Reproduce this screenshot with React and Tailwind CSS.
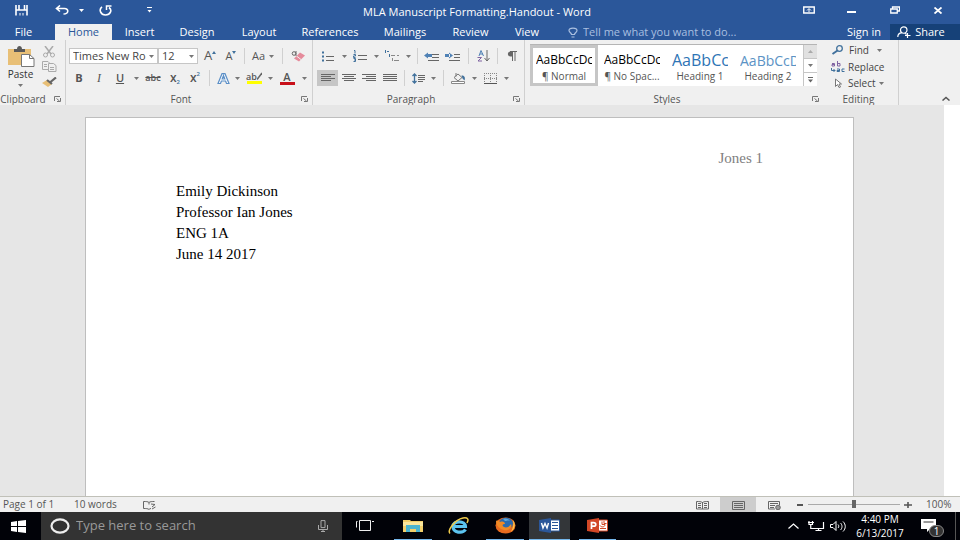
import React, { useState } from 'react';

const tabs = [
  { name: 'Insert', width: 'w-[55px]' },
  { name: 'Design', width: 'w-[60px]' },
  { name: 'Layout', width: 'w-[64px]' },
  { name: 'References', width: 'w-[78px]' },
  { name: 'Mailings', width: 'w-[72px]' },
  { name: 'Review', width: 'w-[59px]' },
  { name: 'View', width: 'w-[54px]' },
];

const styleCards = [
  { name: '¶ Normal', sample: 'AaBbCcDc', look: 'text-[12px] text-black' },
  { name: '¶ No Spac...', sample: 'AaBbCcDc', look: 'text-[12px] text-black' },
  { name: 'Heading 1', sample: 'AaBbCc', look: 'text-[16px] text-[#2e74b5]' },
  { name: 'Heading 2', sample: 'AaBbCcD', look: 'text-[14px] text-[#5b93c5]' },
];

const Svg = ({ w, h, children, className = '' }) => (
  <svg width={w} height={h} viewBox={`0 0 ${w} ${h}`} fill="none" className={`shrink-0 ${className}`} aria-hidden="true">
    {children}
  </svg>
);

const Caret = () => (
  <Svg w={5} h={3}>
    <path d="M0 0h5L2.5 3z" fill="#777" />
  </Svg>
);

const Tool = ({ label, width, className = '', children }) => (
  <button
    type="button"
    aria-label={label}
    className={`flex h-4 shrink-0 items-center justify-center ${width} ${className}`}
  >
    {children}
  </button>
);

const Divider = ({ width }) => (
  <div className={`flex shrink-0 justify-center ${width}`}>
    <div className="h-4 w-px bg-[#d0d0d0]" />
  </div>
);

const Launcher = ({ label }) => (
  <button type="button" aria-label={label}>
    <Svg w={7} h={6}>
      <path d="M.5 5V.5H6M2.5 2.5l3 2.5M6.500 2v3.500H3" stroke="#777" />
    </Svg>
  </button>
);

const GroupLabel = ({ children, launcher }) => (
  <div className="mt-auto flex h-3 items-center pr-1 text-[10px] leading-3 text-[#555]">
    <span className="flex-1 pr-2 text-center">{children}</span>
    {launcher && <Launcher label={launcher} />}
  </div>
);

const TitleBar = () => (
  <div className="flex h-6 items-center">
    <div className="flex flex-1 items-center">
      <Tool label="Save" width="w-[43px]">
        <Svg w={13} h={11} className="-mt-1">
          <path d="M1 0v10.500M12 0v10.500M1 5h11M4 0v4.500M9.500 0v4.500" stroke="#fff" strokeWidth="1.600" />
          <path d="M5 8v2.500M8 8v2.500" stroke="#fff" />
        </Svg>
      </Tool>
      <Tool label="Undo" width="w-[38px]">
        <Svg w={14} h={10} className="-mt-1">
          <path d="M5 .5 1.500 3.500 5 6.500M2 3.500h7.500c4.500 0 4.500 5.500-1 5.500" stroke="#fff" strokeWidth="1.600" />
        </Svg>
      </Tool>
      <Tool label="Undo history" width="w-2" className="-ml-1">
        <Svg w={5} h={3} className="-mt-1"><path d="M0 0h5L2.500 3z" fill="#fff" /></Svg>
      </Tool>
      <Tool label="Redo" width="w-[40px]">
        <Svg w={13} h={11} className="-mt-1">
          <path d="M3 1.800C-.5 4.500 1.500 10 6.500 10s7-5 3.500-7.500" stroke="#fff" strokeWidth="1.600" />
          <path d="M7.500 5V1H12.500" stroke="#fff" strokeWidth="1.500" />
        </Svg>
      </Tool>
      <Tool label="Customize toolbar" width="w-[48px]">
        <Svg w={5} h={6} className="-mt-1">
          <path d="M0 .5h5" stroke="#fff" />
          <path d="M.5 3h4l-2 2.500z" fill="#fff" />
        </Svg>
      </Tool>
    </div>
    <h1 className="pr-[6px] text-[11px] leading-4">MLA Manuscript Formatting.Handout - Word</h1>
    <div className="flex flex-1 items-center justify-end">
      <Tool label="Ribbon display options" width="w-[43px]">
        <Svg w={12} h={8} className="-mt-1">
          <path d="M.75 1h10.500v6H.75z" stroke="#fff" strokeWidth="1.400" />
          <path d="M6 6V3M4 4.500l2-2 2 2" stroke="#fff" />
        </Svg>
      </Tool>
      <Tool label="Minimize" width="w-[43px]">
        <Svg w={9} h={2}><path d="M0 1h9" stroke="#fff" strokeWidth="2" /></Svg>
      </Tool>
      <Tool label="Restore" width="w-[43px]">
        <Svg w={10} h={8} className="-mt-1">
          <path d="M.75 3h6.500v4H.75zM2.500 3V1h7v4H7.500" stroke="#fff" strokeWidth="1.300" />
        </Svg>
      </Tool>
      <Tool label="Close" width="w-[44px]">
        <Svg w={8} h={7} className="-mt-1"><path d="m.5.5 7 6M7.500.5l-7 6" stroke="#fff" strokeWidth="1.800" /></Svg>
      </Tool>
    </div>
  </div>
);

const TabRow = () => (
  <nav className="flex h-4 items-stretch text-[11px] leading-4">
    <button type="button" className="w-[47px]">File</button>
    <button type="button" className="ml-2 w-[57px] bg-[#f0f0f0] text-[#2b579a]">Home</button>
    {tabs.map((tab) => (
      <button key={tab.name} type="button" className={tab.width}>{tab.name}</button>
    ))}
    <label className="ml-[14px] flex flex-1 items-center gap-[5px] text-[#a9bfe0]">
      <Svg w={10} h={11}>
        <path d="M3.500 7.500C3.500 6 1 5.500 1 3.500 1 .2 9 .2 9 3.500c0 2-2.500 2.500-2.500 4zM3.500 10h3" stroke="#a9bfe0" strokeWidth="1.200" />
      </Svg>
      <input
        type="text"
        aria-label="Tell me"
        placeholder="Tell me what you want to do..."
        className="w-full bg-transparent placeholder:text-[#a9bfe0] focus:outline-none"
      />
    </label>
    <button type="button" className="w-[52px] text-center">Sign in</button>
    <button type="button" className="flex w-[70px] items-center justify-center gap-1 bg-[#164178] pr-2">
      <Svg w={14} h={12}>
        <path d="M.8 11c0-2.500 2-4 4-4.300M3.500 4c0-4.300 6.500-4.300 6.500 0S3.500 8.300 3.500 4zM8 7l1.500 1.500M10.500 7v5M8 9.500h5.500" stroke="#fff" strokeWidth="1.200" />
      </Svg>
      Share
    </button>
  </nav>
);

const ClipboardGroup = () => (
  <section className="flex w-[65px] flex-col">
    <div className="flex">
      <button type="button" className="flex w-[41px] flex-col items-center pt-[5px] text-[10px] leading-3 text-[#333]">
        <Svg w={28} h={23}>
          <path d="M1 4h23v16H1z" fill="#e8bf76" />
          <path d="M7 4h3c0-4 5-4 5 0h3v3H7z" fill="#595959" />
          <path d="M14.500 9.500h8l4.500 4v8H14.500z" fill="#fff" stroke="#777" />
          <path d="M22.500 9.500v4H27" stroke="#777" />
        </Svg>
        Paste
        <span className="mt-1"><Caret /></span>
      </button>
      <div className="flex flex-col">
        <Tool label="Cut" width="w-4">
          <Svg w={14} h={12} className="mt-2">
            <path d="M3 0l6 8M11 0L5 8" stroke="#aaa" strokeWidth="1.500" />
            <circle cx="3.500" cy="9" r="2" stroke="#aaa" /><circle cx="10.500" cy="9" r="2" stroke="#aaa" />
          </Svg>
        </Tool>
        <Tool label="Copy" width="w-4" className="mt-[2px]">
          <Svg w={15} h={11}>
            <path d="M.5.5H6l2 2v6H.5zM2 3.500h3M2 5.500h3" stroke="#aaa" />
            <path d="M6.500 2.500h5l2.500 2v6H6.500z" fill="#f0f0f0" stroke="#aaa" />
            <path d="M8 6.500h4M8 8.500h4" stroke="#aaa" />
          </Svg>
        </Tool>
        <Tool label="Format painter" width="w-4">
          <Svg w={15} h={10}>
            <path d="M5 3 0 6l6 4 4-3z" fill="#e8bf76" />
            <path d="m5 3 5 4M8.500 5 14 .5" stroke="#666" strokeWidth="2.200" />
          </Svg>
        </Tool>
      </div>
    </div>
    <GroupLabel launcher="Clipboard settings">Clipboard</GroupLabel>
  </section>
);

const Combo = ({ label, width, value, options, onChange }) => (
  <div className={`relative flex h-4 shrink-0 items-center ${width}`}>
    <select
      aria-label={label}
      value={value}
      onChange={(e) => onChange(e.target.value)}
      className="h-4 w-full appearance-none border border-[#c6c6c6] bg-white pr-2 pl-[3px] text-[11px] leading-3 text-[#444]"
    >
      {options.map((option) => (
        <option key={option}>{option}</option>
      ))}
    </select>
    <span className="pointer-events-none absolute right-1"><Caret /></span>
  </div>
);

const FontGroup = () => {
  const [font, setFont] = useState('Times New Ro');
  const [size, setSize] = useState('12');

  return (
    <section className="flex w-[247px] flex-col border-l border-[#d0d0d0] pl-[3px] text-[#555]">
      <div className="mt-2 flex">
        <Combo label="Font" width="w-[89px]" value={font} options={['Times New Ro', 'Calibri']} onChange={setFont} />
        <Combo label="Font size" width="w-[40px]" value={size} options={['11', '12', '14']} onChange={setSize} />
        <Tool label="Grow font" width="w-6" className="text-[13px]">
          A<Svg w={4} h={3} className="mb-2"><path d="M0 3h4L2 0z" fill="#41719c" /></Svg>
        </Tool>
        <Tool label="Shrink font" width="w-[18px]" className="text-[11px]">
          A<Svg w={4} h={3} className="mb-2"><path d="M0 0h4L2 3z" fill="#41719c" /></Svg>
        </Tool>
        <Divider width="w-2" />
        <Tool label="Change case" width="w-[30px]" className="gap-1 text-[11px]">Aa<Caret /></Tool>
        <Divider width="w-2" />
        <Tool label="Clear formatting" width="w-6">
          <Svg w={14} h={11}>
            <path d="m9 1.500 5 3L8 10.500l-5-3z" fill="#e58b9b" />
            <path d="m5.500 5 4.500 3.500" stroke="#f0f0f0" />
            <circle cx="3" cy="2.500" r="1.800" stroke="#666" />
            <path d="M5 0v5" stroke="#666" />
          </Svg>
        </Tool>
      </div>
      <div className="mt-[6px] flex">
        <Tool label="Bold" width="w-5" className="text-[11px] font-bold">B</Tool>
        <Tool label="Italic" width="w-5" className="font-['Liberation_Serif',serif] text-[12px] italic">I</Tool>
        <Tool label="Underline" width="w-[22px]" className="text-[11px] font-semibold underline">U</Tool>
        <Tool label="Underline style" width="w-[10px]"><Caret /></Tool>
        <Tool label="Strikethrough" width="w-6" className="text-[9px] font-semibold line-through">abc</Tool>
        <Tool label="Subscript" width="w-5" className="text-[12px] font-semibold">
          x<span className="mt-2 text-[6px] text-[#41719c]">2</span>
        </Tool>
        <Tool label="Superscript" width="w-5" className="text-[12px] font-semibold">
          x<span className="mb-2 text-[6px] text-[#41719c]">2</span>
        </Tool>
        <Divider width="w-2" />
        <Tool label="Text effects" width="w-5">
          <Svg w={13} h={11}>
            <path d="M1 10.500 5 .7h3l4 9.800H9.500L8.600 8H4.400l-.9 2.500zM5.200 6h2.600L6.500 2.500z" stroke="#5b8fc7" strokeWidth="1.200" fill="#fff" />
          </Svg>
        </Tool>
        <Tool label="Text effects menu" width="w-2"><Caret /></Tool>
        <Tool label="Highlight" width="w-[26px]" className="flex-col text-[9px] leading-[9px] font-semibold">
          <span className="flex">ab
            <Svg w={5} h={8}><path d="M0 7.500 5 1" stroke="#666" strokeWidth="1.500" /></Svg>
          </span>
          <span className="h-[3px] w-[15px] bg-[#ffff00]" />
        </Tool>
        <Tool label="Highlight color" width="w-[7px]"><Caret /></Tool>
        <Tool label="Font color" width="w-[26px]" className="flex-col text-[11px] leading-[10px] font-semibold">
          A<span className="h-[3px] w-[15px] bg-[#c8101a]" />
        </Tool>
        <Tool label="Font color menu" width="w-2"><Caret /></Tool>
      </div>
      <GroupLabel launcher="Font settings">Font</GroupLabel>
    </section>
  );
};

const Lines = ({ d }) => (
  <Svg w={14} h={8}>
    <path d={d} stroke="#666" />
  </Svg>
);

const ParagraphGroup = () => (
  <section className="flex w-[212px] flex-col border-l border-[#d0d0d0] pl-1 text-[#555]">
    <div className="mt-2 flex">
      <Tool label="Bullets" width="w-[22px]">
        <Svg w={12} h={11}>
          <path d="M0 1.500h2M0 5.500h2M0 9.500h2" stroke="#41719c" strokeWidth="2" />
          <path d="M4 5.500h8M4 9.500h8" stroke="#666" />
        </Svg>
      </Tool>
      <Tool label="Bullet library" width="w-[10px]"><Caret /></Tool>
      <Tool label="Numbering" width="w-[22px]">
        <Svg w={14} h={12}>
          <path d="M1 .5h1v3M.5 4.500h2v1.500h-2v1.500h2M.5 8.500h2v3h-2M1 10h1" stroke="#41719c" />
          <path d="M5 5.500h9M5 9.500h9" stroke="#666" />
        </Svg>
      </Tool>
      <Tool label="Numbering library" width="w-[10px]"><Caret /></Tool>
      <Tool label="Multilevel list" width="w-[22px]">
        <Svg w={16} h={12}>
          <path d="M1.500 0v3M3 1.500h2M5.500 4v3" stroke="#41719c" />
          <path d="M7 5.500h4M13 5.500h2M8.500 8v3M10 10.500h5" stroke="#888" />
        </Svg>
      </Tool>
      <Tool label="Multilevel library" width="w-[10px]"><Caret /></Tool>
      <Divider width="w-2" />
      <Tool label="Decrease indent" width="w-5">
        <Svg w={15} h={9}>
          <path d="M8 2.500h7M8 5.500h7M4 8.500h11" stroke="#666" />
          <path d="M4 .5v6L0 3.500zM3 2h5v3H3z" fill="#4f81b5" />
        </Svg>
      </Tool>
      <Tool label="Increase indent" width="w-[22px]">
        <Svg w={15} h={9}>
          <path d="M9 2.500h6M9 5.500h6M4 8.500h11" stroke="#666" />
          <path d="M4 .5v6l4-3zM0 2h5v3H0z" fill="#4f81b5" />
        </Svg>
      </Tool>
      <Divider width="w-[10px]" />
      <Tool label="Sort" width="w-5">
        <Svg w={13} h={12}>
          <path d="M2 6 4 .5 6.500 6M3 4h3" stroke="#4f81b5" />
          <path d="M.5 7.500h4L1 11h4" stroke="#8064a2" />
          <path d="M10 0v10.500M7.500 8l2.500 3 2.500-3" stroke="#666" />
        </Svg>
      </Tool>
      <Divider width="w-2" />
      <Tool label="Show marks" width="w-[22px]">
        <Svg w={10} h={10}>
          <path d="M5 .5H3.500C0 .5 0 5.500 3.500 5.500H5z" fill="#666" />
          <path d="M3 .5h7M5.500 0v10M8 0v10" stroke="#666" />
        </Svg>
      </Tool>
    </div>
    <div className="mt-[6px] flex">
      <Tool label="Align left" width="w-[21px]" className="bg-[#c6c6c6]"><Lines d="M0 .5h14M0 2.500h10M0 4.500h14M0 6.500h10" /></Tool>
      <Tool label="Center" width="w-[21px]"><Lines d="M0 .5h14M2 2.500h10M0 4.500h14M2 6.500h10" /></Tool>
      <Tool label="Align right" width="w-5"><Lines d="M0 .5h14M4 2.500h10M0 4.500h14M4 6.500h10" /></Tool>
      <Tool label="Justify" width="w-[21px]"><Lines d="M0 .5h14M0 2.500h14M0 4.500h14M0 6.500h14" /></Tool>
      <Divider width="w-2" />
      <Tool label="Line spacing" width="w-5">
        <Svg w={13} h={11}>
          <path d="M2.500 1v9M.5 3l2-2 2 2M.5 8l2 2 2-2" stroke="#41719c" strokeWidth="1.300" />
          <path d="M6 2.500h7M6 4.500h7M6 6.500h7M6 8.500h5" stroke="#666" />
        </Svg>
      </Tool>
      <Tool label="Line spacing menu" width="w-[10px]"><Caret /></Tool>
      <Divider width="w-[10px]" />
      <Tool label="Shading" width="w-5">
        <Svg w={15} h={11}>
          <path d="M3 4.500 7 1l4 3.500-4 3.500zM5 0v3.500" stroke="#777" />
          <path d="M10.500 2.500c3 0 4 2 3 5l-2-2z" fill="#41719c" />
          <path d="M.5 8.500h13v2H.5z" fill="#fff" stroke="#888" />
        </Svg>
      </Tool>
      <Tool label="Shading color" width="w-3"><Caret /></Tool>
      <Tool label="Borders" width="w-5">
        <Svg w={13} h={11}>
          <path d="M.5 0v10M6.500 0v10M12.500 0v10M0 .5h13M0 5.500h13" stroke="#888" strokeDasharray="1 1" />
          <path d="M0 10.500h13" stroke="#555" />
        </Svg>
      </Tool>
      <Tool label="Borders menu" width="w-3"><Caret /></Tool>
    </div>
    <GroupLabel launcher="Paragraph settings">Paragraph</GroupLabel>
  </section>
);

const StylesGroup = () => (
  <section className="flex w-[299px] flex-col border-l border-[#d0d0d0] pl-[5px]">
    <div className="mt-1 flex h-[42px] w-[287px] border-t border-[#b5b5b5] bg-white">
      {styleCards.map((card, i) => (
        <button
          key={card.name}
          type="button"
          className={`flex w-[68px] shrink-0 flex-col items-center border-[3px] ${i === 0 ? 'border-[#c6c6c6]' : 'border-transparent'}`}
        >
          <span className={`mt-[3px] flex h-[18px] w-[56px] items-center overflow-hidden whitespace-nowrap ${card.look}`}>
            {card.sample}
          </span>
          <span className="text-[10px] leading-[14px] whitespace-nowrap text-[#555]">{card.name}</span>
        </button>
      ))}
      <div className="ml-auto flex w-[14px] flex-col border-l border-[#c6c6c6]">
        <button type="button" aria-label="Scroll up" className="flex flex-1 items-center justify-center bg-[#e1e1e1]">
          <Svg w={5} h={3}><path d="M0 3h5L2.500 0z" fill="#aaa" /></Svg>
        </button>
        <button type="button" aria-label="Scroll down" className="flex flex-1 items-center justify-center border-y border-[#c6c6c6]">
          <Caret />
        </button>
        <button type="button" aria-label="More styles" className="flex flex-1 items-center justify-center">
          <Svg w={5} h={6}><path d="M0 0h5v1H0zM0 2.500h5L2.500 5.500z" fill="#666" /></Svg>
        </button>
      </div>
    </div>
    <GroupLabel launcher="Styles settings">Styles</GroupLabel>
  </section>
);

const EditingGroup = () => (
  <section className="flex w-[76px] flex-col border-r border-[#d0d0d0] pl-2 text-[10px] leading-3 text-[#444]">
    <button type="button" className="mt-1 flex h-3 items-center gap-1">
      <Svg w={14} h={10}>
        <circle cx="8.500" cy="3.500" r="2.800" stroke="#41719c" strokeWidth="1.300" />
        <path d="m6.500 5.500-5 3.500" stroke="#41719c" strokeWidth="2" />
      </Svg>
      <span className="mr-1">Find</span>
      <Caret />
    </button>
    <button type="button" className="mt-[5px] flex h-3 items-center gap-[3px]">
      <Svg w={14} h={12}>
        <path d="M1 2.500h2.500V5H1V3.500h2.500M6.500 0v5H9V2.500H6.500" stroke="#8064a2" />
        <path d="M.5 7v2.500H4M2.500 8l1.500 1.500L2.500 11M6 8h2.500v2.500H6V9.500h2.500M13.500 8H11v2.500h2.500" stroke="#41719c" />
      </Svg>
      Replace
    </button>
    <button type="button" className="mt-1 flex h-3 items-center gap-[3px]">
      <Svg w={14} h={10}>
        <path d="M4.500 1v7.500l2-2 1.500 3 1.500-.5-1.500-3h2.500z" fill="#fff" stroke="#777" />
      </Svg>
      Select
      <Caret />
    </button>
    <GroupLabel>Editing</GroupLabel>
  </section>
);

const StatusBar = () => (
  <footer className="flex h-4 shrink-0 items-stretch border-t border-[#c0c0b8] bg-[#f0f0f0] text-[10px] leading-[15px] text-[#555]">
    <span className="w-[74px] pl-[3px]">Page 1 of 1</span>
    <span className="w-[68px]">10 words</span>
    <Tool label="Proofing" width="w-[14px]">
      <Svg w={13} h={9}>
        <path d="M6 1.500C5 .5 3 .5.5.5v7c2.500 0 4.500 0 5.500 1 .5-.5 1-1 2-1M6 1.500c1-1 3-1 5.500-1M6 1.500v2M8 3l4 .5-3 2.500M9 8l3.500-2" stroke="#666" />
      </Svg>
    </Tool>
    <div className="ml-auto flex items-stretch">
      <Tool label="Read mode" width="w-9">
        <Svg w={13} h={9}>
          <path d="M6.500 1.500C5 .5 3 .5.5.5v7.500h12V.5c-2.500 0-4.500 0-6 1zM6.500 1v7M2 2.500h3M2 4.500h3M2 6.500h3M8 2.500h3M8 4.500h3M8 6.500h3" stroke="#666" />
        </Svg>
      </Tool>
      <Tool label="Print layout" width="w-9" className="bg-[#cdcdcd]">
        <Svg w={13} h={9}><path d="M.5.5h12v8H.5zM2 2.500h9M2 4.500h9M2 6.500h9" stroke="#666" /></Svg>
      </Tool>
      <Tool label="Web layout" width="w-9">
        <Svg w={13} h={9}>
          <path d="M11.500 4V.5H.5v7.500H7M2 2.500h8M2 4.500h5M2 6.500h4" stroke="#666" />
          <circle cx="10" cy="6.500" r="2.300" fill="#999" stroke="#666" />
        </Svg>
      </Tool>
      <Tool label="Zoom out" width="w-4"><Svg w={6} h={2}><path d="M0 1h6" stroke="#555" strokeWidth="2" /></Svg></Tool>
      <input
        type="range"
        aria-label="Zoom"
        min="0"
        max="100"
        defaultValue="50"
        className="w-[92px] appearance-none bg-transparent [&::-webkit-slider-runnable-track]:h-px [&::-webkit-slider-runnable-track]:bg-[#aaa] [&::-webkit-slider-thumb]:-mt-1 [&::-webkit-slider-thumb]:h-2 [&::-webkit-slider-thumb]:w-1 [&::-webkit-slider-thumb]:appearance-none [&::-webkit-slider-thumb]:bg-[#666]"
      />
      <Tool label="Zoom in" width="w-4"><Svg w={8} h={6}><path d="M0 3h8M4 0v6" stroke="#555" strokeWidth="1.600" /></Svg></Tool>
      <span className="w-11 pl-[10px]">100%</span>
    </div>
  </footer>
);

const TaskButton = ({ label, width, active, open, children }) => (
  <button
    type="button"
    aria-label={label}
    className={`flex shrink-0 items-center justify-center border-b ${width} ${active ? 'bg-[#333639]' : ''} ${open ? 'border-[#76b9ed]' : 'border-transparent'}`}
  >
    {children}
  </button>
);

const Taskbar = () => (
  <div className="flex h-7 shrink-0 items-stretch bg-[#010208] text-white">
    <button type="button" aria-label="Start" className="flex w-[41px] items-center justify-center pr-1">
      <Svg w={15} h={13}>
        <path d="M0 2 6 1v5H0zM7 .9 15 0v6H7zM0 7h6v5l-6-1zM7 7h8v6l-8-.9z" fill="#fff" />
      </Svg>
    </button>
    <label className="flex w-[301px] items-center bg-[#333] pr-[14px] pl-[9px]">
      <Svg w={20} h={16}>
        <ellipse cx="10" cy="8" rx="8.500" ry="6.700" stroke="#eee" strokeWidth="2.200" />
      </Svg>
      <input
        type="text"
        aria-label="Search"
        placeholder="Type here to search"
        className="ml-[6px] min-w-0 flex-1 bg-transparent text-[13px] placeholder:text-[#999] focus:outline-none"
      />
      <Svg w={10} h={12}>
        <path d="M3 .6h4v7H3zM.5 5v4.500h9V5M5 9.500V12M3 11.500h4" stroke="#aaa" />
      </Svg>
    </label>
    <TaskButton label="Task view" width="w-[46px]">
      <Svg w={18} h={11}>
        <path d="M3.500.5h11v10h-11zM1.500 1.500H.5v6M16 1.500h2" stroke="#eee" />
      </Svg>
    </TaskButton>
    <div className="w-[6px]" />
    <TaskButton label="File Explorer" width="w-[38px]" open>
      <Svg w={20} h={13}>
        <path d="M0 1h7l1 1h12v11H0z" fill="#f2cf6b" />
        <path d="M0 3h20v4H0z" fill="#fbe69c" />
        <path d="M3 6h14v7h-4v-3H7v3H3z" fill="#4bb4cf" />
      </Svg>
    </TaskButton>
    <div className="w-2" />
    <TaskButton label="Internet Explorer" width="w-[38px]">
      <Svg w={22} h={18}>
        <path d="M17.500 12.500c-2.800 4.300-12.500 3.500-12.500-3s12.500-6 12.500 0H6" stroke="#5cc4f0" strokeWidth="3.200" />
        <path d="M2 16.500c-3-3 5-14 13-15.500 5-.9 6 1.500 4 5" stroke="#f0cb4b" strokeWidth="1.500" />
      </Svg>
    </TaskButton>
    <div className="w-2" />
    <TaskButton label="Firefox" width="w-[38px]" open>
      <Svg w={21} h={17}>
        <ellipse cx="10.500" cy="8.500" rx="10" ry="8" fill="#e66a1f" />
        <ellipse cx="11" cy="6.500" rx="7" ry="5.800" fill="#2a6cb0" />
        <path d="M8 2c3-1 6 0 7 2-2-1-3 0-5 0z" fill="#5fa8dc" />
        <path d="M1 4c2-1 3 0 4 1 3-1 5 0 5 2-3 0-3 2-1 3 3 1.500 6-1 7-3 2 4-3 7-7 6S1 9 1 4z" fill="#f08a24" />
        <path d="M18 3c3 4 2 9-2 11.500 2-3 3-7 2-11.500z" fill="#ffcc4d" />
      </Svg>
    </TaskButton>
    <div className="w-[5px]" />
    <TaskButton label="Word" width="w-[41px]" active open>
      <Svg w={21} h={15}>
        <path d="M10 2h10.500v11H10z" fill="#fff" stroke="#2b579a" />
        <path d="M13 4.500h6M13 7.500h6M13 10.500h6" stroke="#2b579a" />
        <path d="M0 2 12 0v15L0 13z" fill="#2b579a" />
        <path d="m2.500 5 1.500 5L6 5.500 8 10l1.500-5" stroke="#fff" strokeWidth="1.400" />
      </Svg>
    </TaskButton>
    <div className="w-[9px]" />
    <TaskButton label="PowerPoint" width="w-[37px]" open>
      <Svg w={21} h={15}>
        <path d="M10 2h10.500v11H10z" fill="#fff" stroke="#d24726" />
        <path d="M15 3.500v3h3c0 3-4 3-5 1M17 3v2.500h2.500M13 10.500h6" stroke="#d24726" />
        <path d="M0 2 12 0v15L0 13z" fill="#d24726" />
        <path d="M4.500 11V4.700h2c3 0 3 3.500 0 3.500h-2" stroke="#fff" strokeWidth="1.700" />
      </Svg>
    </TaskButton>
    <div className="ml-auto flex items-center">
      <Tool label="Hidden icons" width="w-[22px]"><Svg w={11} h={6}><path d="m.5 5.500 5-4.500 5 4.500" stroke="#fff" strokeWidth="1.200" /></Svg></Tool>
      <Tool label="Network" width="w-6">
        <Svg w={17} h={10}>
          <path d="M7 2.500M15.500 1v6.500H5M10.500 7.500v2M7.500 9.500h6M1 0v3.500h3.500V0M2.750 3v4.500H6M0 1.500h6" stroke="#fff" strokeWidth="1.200" />
        </Svg>
      </Tool>
      <Tool label="Volume" width="w-5">
        <Svg w={16} h={11}>
          <path d="M.5 3.500h2.500l3-3v9l-3-3H.5zM8 3.500c1 1 1 2.500 0 3.500M10.500 2c2 2 2 5 0 7M13 .5c3 3 3 7 0 10" stroke="#fff" />
        </Svg>
      </Tool>
      <div className="w-[64px] text-center text-[10px] leading-[14px]">
        <div>4:40 PM</div>
        <div>6/13/2017</div>
      </div>
      <button type="button" aria-label="Notifications" className="relative w-[43px] self-stretch">
        <Svg w={16} h={14} className="ml-[9px]">
          <path d="M0 0h15v10H9l-3 3v-3H0z" fill="#fff" />
          <path d="M2.500 3h10" stroke="#333" />
        </Svg>
        <span className="absolute right-[11px] bottom-[3px] flex h-3 w-[15px] items-center justify-center rounded-full border border-[#888] bg-[#333] text-[10px] leading-[10px]">
          1
        </span>
      </button>
      <div className="w-[5px] self-stretch border-l border-[#555]" />
    </div>
  </div>
);

const Document = () => (
  <main className="mr-4 flex min-h-0 flex-1 bg-[#e6e6e6] pt-3 pr-[90px] pl-[85px]">
    <article className="flex-1 border border-b-0 border-[#bebebe] bg-white px-[90px] pt-[30px] font-['Liberation_Serif','Times_New_Roman',serif] text-[15px] leading-[21px] text-black">
      <header className="mb-3 text-right text-[#808080]">Jones 1</header>
      <p>Emily Dickinson</p>
      <p>Professor Ian Jones</p>
      <p>ENG 1A</p>
      <p>June 14 2017</p>
    </article>
  </main>
);

export default function App() {
  return (
    <div className="flex h-screen flex-col overflow-hidden bg-white font-['Open_Sans','Noto_Sans',sans-serif]">
      <header className="shrink-0 bg-[#2b579a] text-white">
        <TitleBar />
        <TabRow />
      </header>
      <div className="flex h-[65px] shrink-0 bg-[#f0f0f0]">
        <ClipboardGroup />
        <FontGroup />
        <ParagraphGroup />
        <StylesGroup />
        <EditingGroup />
        <button type="button" aria-label="Collapse ribbon" className="mt-auto mr-[10px] mb-1 ml-auto">
          <Svg w={8} h={5}><path d="m.5 4.500 3.500-3 3.500 3" stroke="#555" strokeWidth="1.500" /></Svg>
        </button>
      </div>
      <Document />
      <StatusBar />
      <Taskbar />
    </div>
  );
}
